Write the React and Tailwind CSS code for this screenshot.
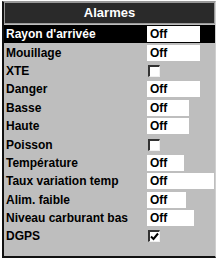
const rows = [
  { label: "Rayon d'arrivée", value: 'Off', w: 'w-[53px]', selected: true },
  { label: 'Mouillage', value: 'Off', w: 'w-[53px]' },
  { label: 'XTE', check: false },
  { label: 'Danger', value: 'Off', w: 'w-[53px]' },
  { label: 'Basse', value: 'Off', w: 'w-[42px]' },
  { label: 'Haute', value: 'Off', w: 'w-[42px]' },
  { label: 'Poisson', check: false },
  { label: 'Température', value: 'Off', w: 'w-[37px]' },
  { label: 'Taux variation temp', value: 'Off', w: 'w-[67px]' },
  { label: 'Alim. faible', value: 'Off', w: 'w-[39px]' },
  { label: 'Niveau carburant bas', value: 'Off', w: 'w-[47px]' },
  { label: 'DGPS', check: true },
]

function Checkbox({ checked }) {
  return (
    <div className="ml-[1px] w-[12px] h-[12px] bg-white border-t-2 border-l-2 border-r border-b border-t-[#333] border-l-[#333] border-r-[#f0f0f0] border-b-[#f0f0f0] flex items-center justify-center">
      {checked && (
        <svg width="9" height="9" viewBox="0 0 9 9">
          <path d="M1 4.5 L3.5 7 L8 1.5" fill="none" stroke="#000" strokeWidth="2" />
        </svg>
      )}
    </div>
  )
}

export default function App() {
  return (
    <div
      className="w-[218px] h-[260px] bg-white pt-[1px] pl-[2px] pr-[2px] pb-[2px]"
      style={{ fontFamily: '"Liberation Sans", Arial, sans-serif' }}
    >
      <div className="flex flex-col h-full bg-[#bebebe] border-l-2 border-b-2 border-t border-r border-l-[#111] border-b-[#111] border-t-[#999] border-r-[#cfcfcf]">
        {/* Header */}
        <div className="h-[22px] bg-[#2a2a2a] border border-[#9a9a9a] flex items-center justify-center text-white font-bold text-[13px]">
          Alarmes
        </div>

        {/* Rows */}
        <div className="flex flex-col mt-[1px]">
          {rows.map((r) => (
            <div
              key={r.label}
              className={`h-[18.4px] flex items-center font-bold text-[12px] ${
                r.selected ? 'bg-black text-white' : 'text-black'
              }`}
            >
              <div className="w-[143px] pl-[2px] whitespace-nowrap">{r.label}</div>
              {r.check !== undefined ? (
                <Checkbox checked={r.check} />
              ) : (
                <div className={`${r.w} h-[16px] bg-white text-black pl-[3px] leading-[16px]`}>
                  {r.value}
                </div>
              )}
            </div>
          ))}
        </div>
      </div>
    </div>
  )
}
